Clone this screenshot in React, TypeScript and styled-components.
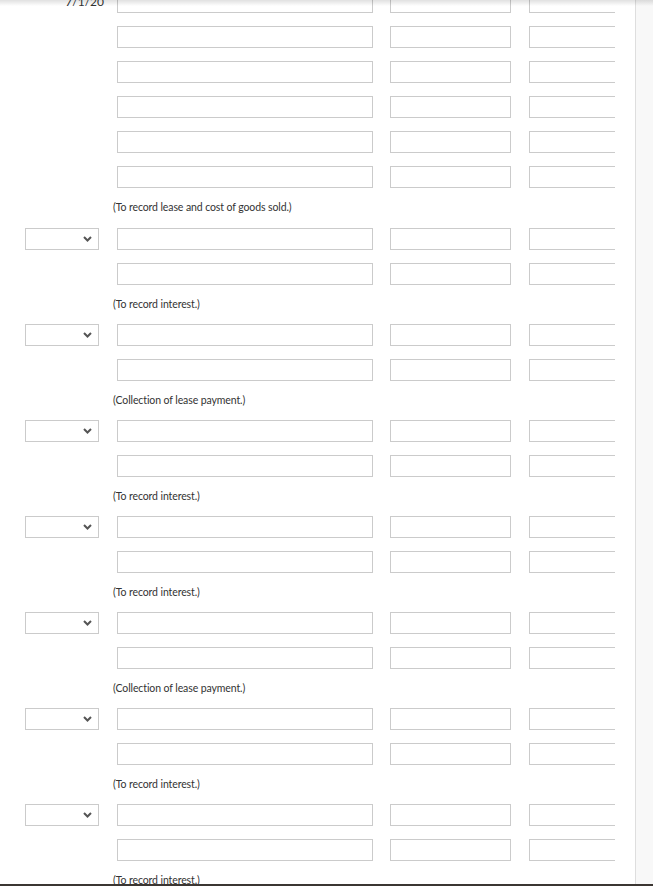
import React from 'react';
import styled, { createGlobalStyle } from 'styled-components';

type Group = {
  lead: 'date' | 'select';
  rows: number;
  note: string;
};

const groups: Group[] = [
  { lead: 'date', rows: 6, note: '(To record lease and cost of goods sold.)' },
  { lead: 'select', rows: 2, note: '(To record interest.)' },
  { lead: 'select', rows: 2, note: '(Collection of lease payment.)' },
  { lead: 'select', rows: 2, note: '(To record interest.)' },
  { lead: 'select', rows: 2, note: '(To record interest.)' },
  { lead: 'select', rows: 2, note: '(Collection of lease payment.)' },
  { lead: 'select', rows: 2, note: '(To record interest.)' },
  { lead: 'select', rows: 2, note: '(To record interest.)' },
];

const Chevron: React.FC = () => (
  <svg width="9" height="6" viewBox="0 0 9 6" fill="none">
    <path d="M1 1l3.5 3.5L8 1" stroke="#555" strokeWidth="2" />
  </svg>
);

const App: React.FC = () => {
  return (
    <>
      <GlobalStyle />
      <StyledPage>
        <StyledBody>
          <StyledShadow />
          <StyledContent>
            <StyledList>
              {groups.map((g, gi) => (
                // eslint-disable-next-line react/no-array-index-key
                <StyledGroup key={gi} first={gi === 0}>
                  {new Array(g.rows).fill('').map((v, ri) => (
                    // eslint-disable-next-line react/no-array-index-key
                    <StyledRow key={ri}>
                      <StyledLead>
                        {ri === 0 && g.lead === 'date' && <StyledDate>7/1/20</StyledDate>}
                        {ri === 0 && g.lead === 'select' && (
                          <StyledSelect>
                            <Chevron />
                          </StyledSelect>
                        )}
                      </StyledLead>
                      <StyledInput width={256} />
                      <StyledInput width={121} gap={17} />
                      <StyledInput width={121} gap={18} />
                    </StyledRow>
                  ))}
                  <StyledNote>{g.note}</StyledNote>
                </StyledGroup>
              ))}
            </StyledList>
          </StyledContent>
          <StyledSide />
        </StyledBody>
        <StyledFooter />
      </StyledPage>
    </>
  );
};
export default App;

const GlobalStyle = createGlobalStyle`
  html, body {
    margin: 0;
    padding: 0;
    background: #fff;
    font-family: Lato, "Open Sans", sans-serif;
    color: #333;
  }
`;

const StyledPage = styled.div`
  height: 886px;
  display: flex;
  flex-direction: column;
  overflow: hidden;
`;

const StyledBody = styled.div`
  position: relative;
  flex: 1;
  display: flex;
  min-height: 0;
`;

const StyledShadow = styled.div`
  position: absolute;
  top: 0;
  left: 0;
  right: 0;
  height: 6px;
  background: linear-gradient(to bottom, rgba(0, 0, 0, 0.12), rgba(0, 0, 0, 0));
  pointer-events: none;
  z-index: 2;
`;

const StyledContent = styled.div`
  width: 635px;
  border-right: 1px solid #dedede;
  overflow: hidden;
`;

const StyledSide = styled.div`
  flex: 1;
  background: #f8f8f8;
`;

const StyledFooter = styled.div`
  height: 2px;
  background: #3b3632;
`;

const StyledList = styled.div`
  width: 615px;
  overflow: hidden;
  margin-top: -9px;
  padding-left: 25px;
  box-sizing: border-box;
`;

const StyledGroup = styled.div<{ first?: boolean }>`
  display: flex;
  flex-direction: column;
  gap: 13px;
  padding-bottom: ${(p) => (p.first ? 14 : 13)}px;
`;

const StyledRow = styled.div`
  display: flex;
  align-items: center;
  height: 22px;
`;

const StyledLead = styled.div`
  width: 78px;
  flex: none;
  display: flex;
  justify-content: flex-end;
  margin-right: 14px;
`;

const StyledDate = styled.span`
  font-size: 12px;
  line-height: 22px;
  color: #333;
  margin-right: -1px;
`;

const StyledSelect = styled.div`
  width: 74px;
  height: 22px;
  box-sizing: border-box;
  border: 1px solid #cbcbcb;
  background: #fff;
  display: flex;
  align-items: center;
  justify-content: flex-end;
  padding-right: 6px;
  margin-right: 4px;
`;

const StyledInput = styled.div<{ width: number; gap?: number }>`
  flex: none;
  width: ${(p) => p.width}px;
  height: 22px;
  box-sizing: border-box;
  border: 1px solid #cbcbcb;
  background: #fff;
  margin-left: ${(p) => p.gap || 0}px;
`;

const StyledNote = styled.div`
  font-size: 10.5px;
  line-height: 13px;
  height: 13px;
  margin-left: 88px;
  color: #333;
  white-space: nowrap;
  letter-spacing: -0.1px;
`;
